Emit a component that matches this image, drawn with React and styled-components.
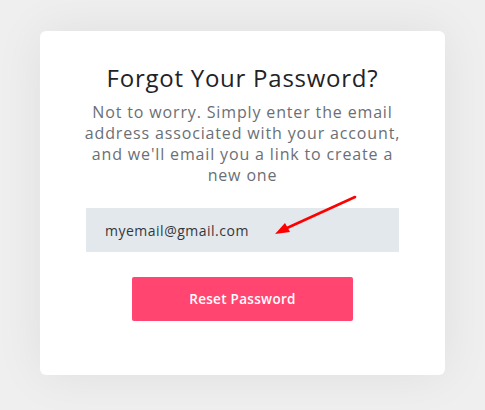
import React from "react";
import styled, { createGlobalStyle } from "styled-components";

const GlobalStyle = createGlobalStyle`
    html, body {
        margin: 0;
        padding: 0;
        background: #efefef;
    }
    body {
        font-family: "Open Sans", "Liberation Sans", sans-serif;
    }
`;

const Page = styled.div`
    width: 485px;
    height: 410px;
    display: flex;
    justify-content: center;
    padding-top: 31px;
    box-sizing: border-box;
`;

const Card = styled.div`
    width: 405px;
    height: 344px;
    background: #ffffff;
    border-radius: 6px;
    box-shadow: 0 0 50px rgba(0, 0, 0, 0.07);
    display: flex;
    flex-direction: column;
    align-items: center;
    padding-top: 32px;
    box-sizing: border-box;
`;

const Title = styled.h1`
    margin: 0;
    font-size: 24px;
    font-weight: 400;
    color: #1f2328;
    line-height: 30px;
    letter-spacing: 0.75px;
`;

const Text = styled.p`
    margin: 9px 0 0;
    width: 318px;
    text-align: center;
    font-size: 16px;
    line-height: 21px;
    letter-spacing: 0.85px;
    color: #6b6f75;
`;

const Field = styled.div`
    position: relative;
    margin-top: 22px;
    width: 313px;
    height: 44px;
    background: #e3e8ec;
    display: flex;
    align-items: center;
    padding-left: 19px;
    box-sizing: border-box;
    font-size: 14px;
    letter-spacing: 0.5px;
    color: #33373c;
`;

const Arrow = styled.svg`
    position: absolute;
    left: 185px;
    top: -14px;
    overflow: visible;
`;

const Button = styled.button`
    margin-top: 25px;
    width: 221px;
    height: 44px;
    border: none;
    border-radius: 2px;
    background: #ff4570;
    color: #ffffff;
    font-family: inherit;
    font-size: 13.5px;
    font-weight: 600;
    letter-spacing: 0.3px;
    cursor: pointer;
`;

const App = () => {
    return (
        <>
            <GlobalStyle />
            <Page>
                <Card>
                    <Title>Forgot Your Password?</Title>
                    <Text>
                        Not to worry. Simply enter the email address associated with your account, and we'll email you a link to create a new one
                    </Text>
                    <Field>
                        myemail@gmail.com
                        {/* red annotation arrow */}
                        <Arrow width="90" height="45" viewBox="0 0 90 45">
                            <line x1="84" y1="3" x2="16" y2="34" stroke="#ff0000" strokeWidth="2.5" strokeLinecap="round" />
                            <polygon points="4,40 14,29 19,38" fill="#ff0000" />
                        </Arrow>
                    </Field>
                    <Button>Reset Password</Button>
                </Card>
            </Page>
        </>
    );
};

export default App;
